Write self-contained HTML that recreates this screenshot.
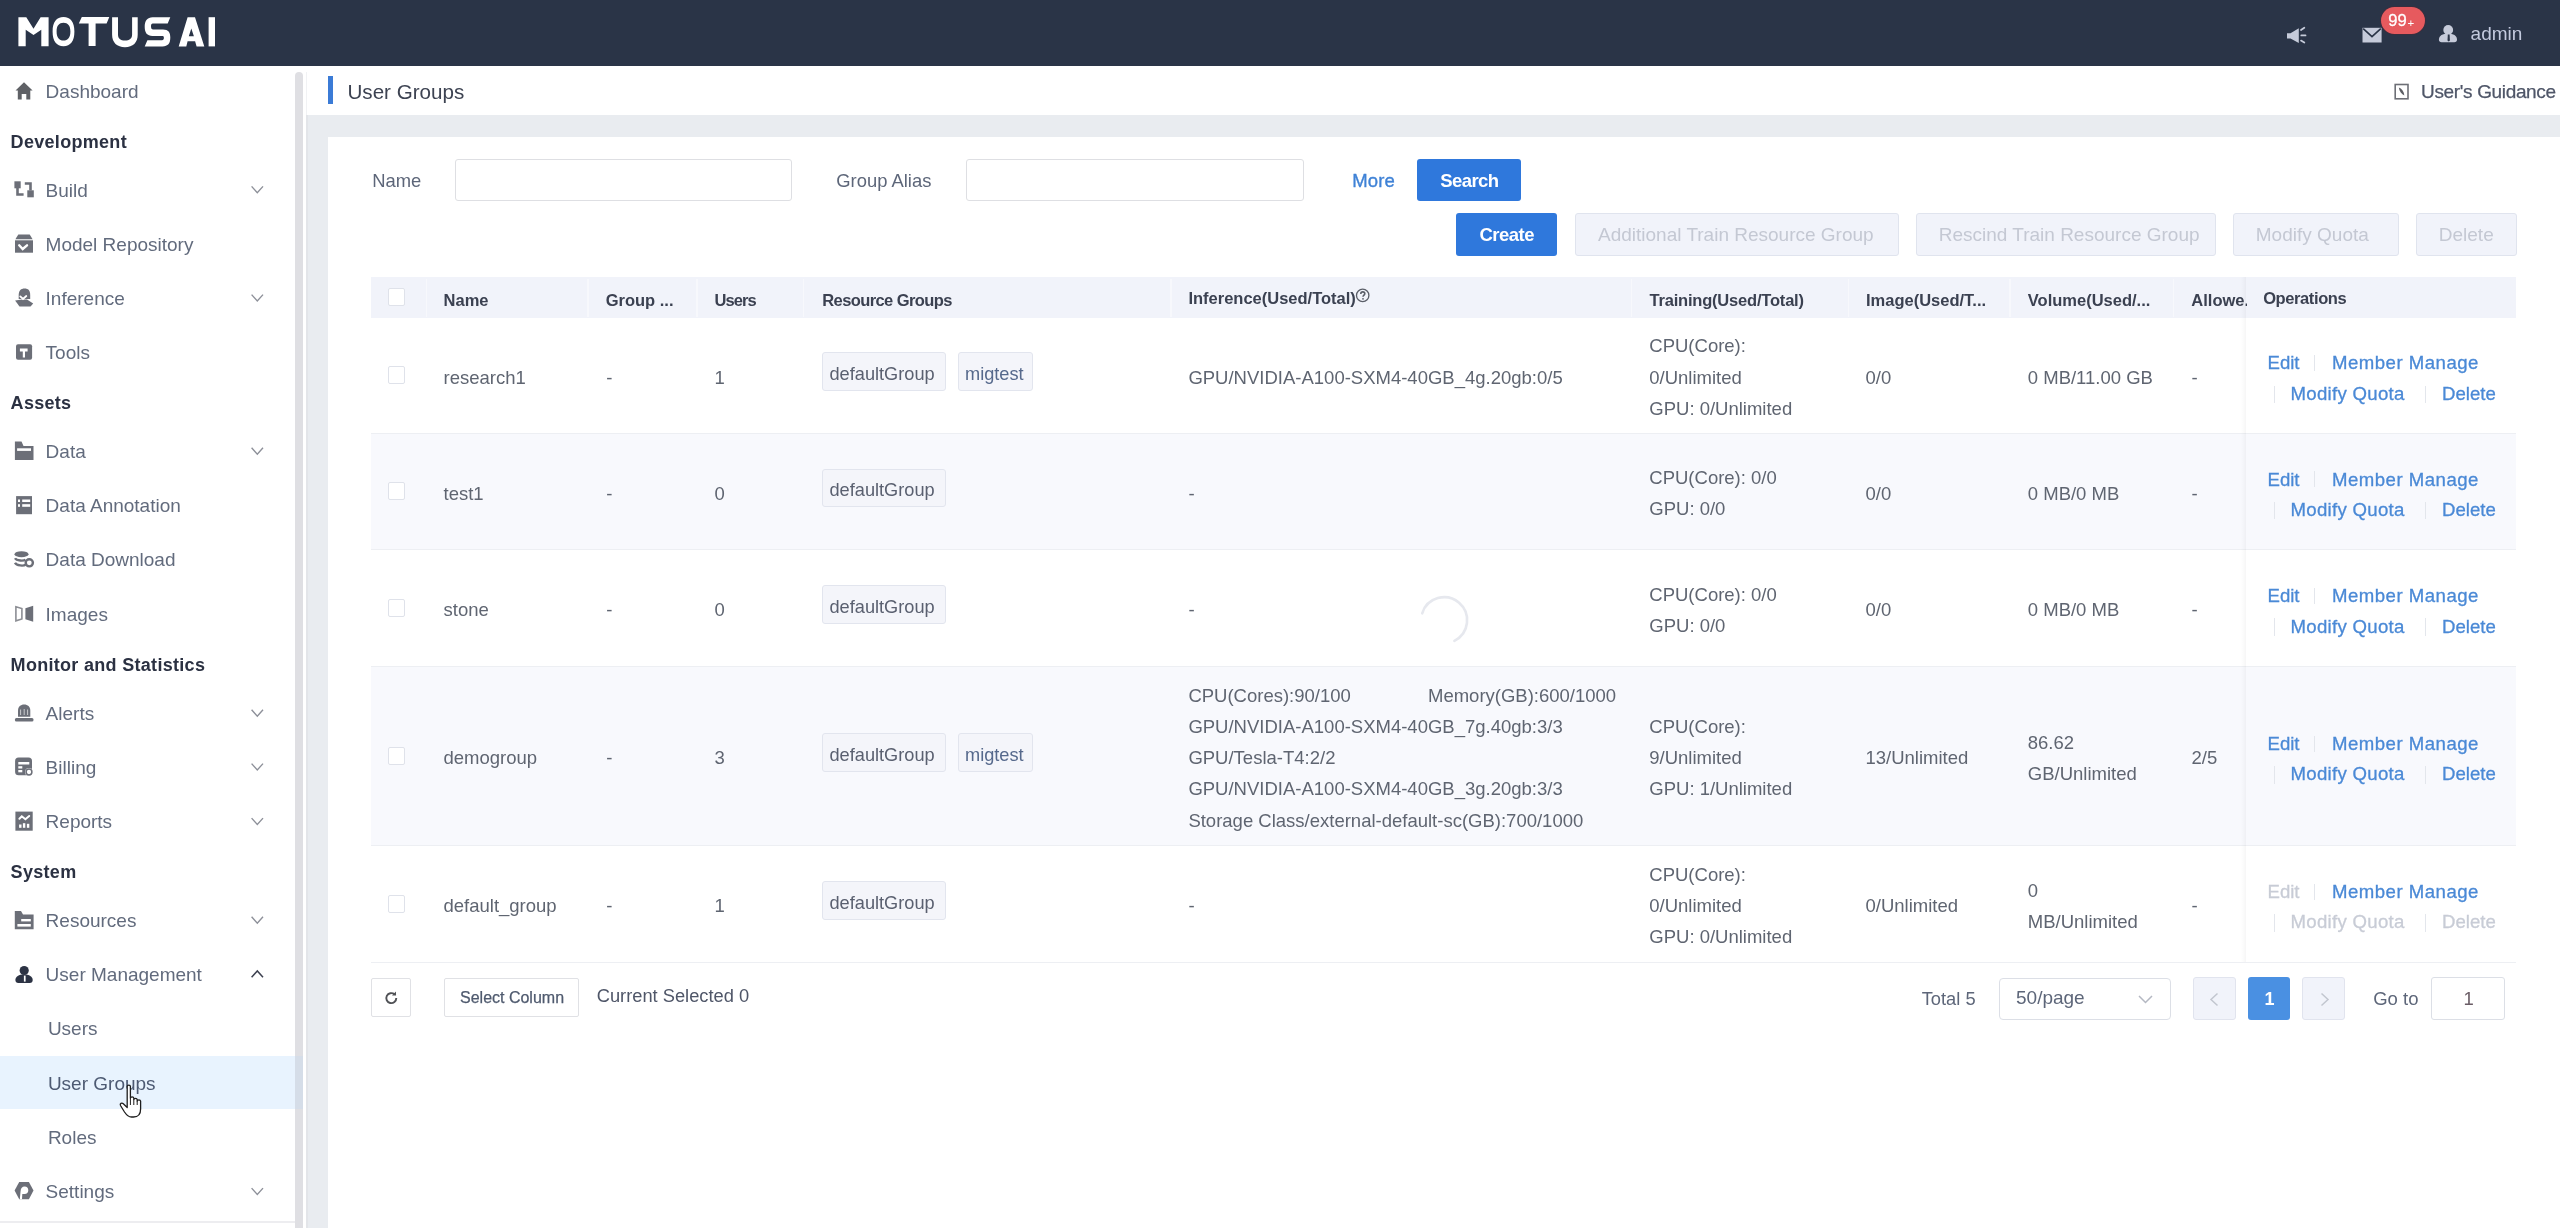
<!DOCTYPE html>
<html><head><meta charset="utf-8"><title>User Groups</title>
<style>
html,body{margin:0;padding:0;width:2560px;height:1228px;overflow:hidden;background:#fff}
body{position:relative;font-family:"Liberation Sans", sans-serif}
.t{position:absolute;white-space:nowrap;font-family:"Liberation Sans", sans-serif}
.r{position:absolute}
</style></head><body>
<div id="wrap" style="position:absolute;left:0;top:0;width:2560px;height:1228px;filter:blur(0.6px)">
<div class="r" style="left:0.0px;top:0.0px;width:2560.0px;height:1228.0px;background:#ffffff"></div>
<div class="r" style="left:0.0px;top:0.0px;width:2560.0px;height:66.0px;background:#2a3447"></div>
<svg class="r" style="left:0px;top:0px;" width="230" height="66" viewBox="0 0 230 66"><path fill="#fff" d="M18.4 46.3 L18.4 17.2 L26.3 17.2 L33.5 28.7 L40.6 17.2 L48.6 17.2 L48.6 46.3 L41.3 46.3 L41.3 29.8 L33.5 35.1 L25.7 29.8 L25.7 46.3 Z"/><path fill="#fff" fill-rule="evenodd" d="M63.5 17.1 C70.5 17.1 74.4 22 74.4 31.5 C74.4 41.2 70.5 46.2 63.5 46.2 C56.5 46.2 52.6 41.2 52.6 31.5 C52.6 22 56.5 17.1 63.5 17.1 Z M63.5 22.8 C59.2 22.8 56.6 25.6 56.6 31.5 C56.6 37.6 59.2 40.6 63.5 40.6 C67.8 40.6 70.4 37.6 70.4 31.5 C70.4 25.6 67.8 22.8 63.5 22.8 Z"/><path fill="#fff" d="M81.8 17.1 L109.3 17.1 L106.6 23.4 L95.6 23.4 L95.6 46 L88.6 46 L88.6 23.4 L78.8 23.4 Z"/><path fill="#fff" d="M112.1 17.2 L118.0 17.2 L118.0 34.5 C118.0 38.6 120.6 40.6 125.0 40.6 C129.4 40.6 132.1 38.6 132.1 34.5 L132.1 17.2 L137.7 17.2 L137.7 34.8 C137.7 42.6 133.0 47.2 125.0 47.2 C117.0 47.2 112.1 42.6 112.1 34.8 Z"/><path fill="#fff" d="M170.3 17.2 L167.7 23.6 L152.8 23.6 C151.5 23.6 151.0 24.4 151.0 26.3 C151.0 28.3 151.6 29.6 153.2 29.6 L163.0 29.6 C168.4 29.6 170.3 32.3 170.3 37.6 C170.3 43.6 168.0 46.4 162.5 46.4 L144.7 46.4 L147.4 40.2 L162.0 40.2 C163.4 40.2 163.9 39.3 163.9 37.7 C163.9 36.3 163.3 35.9 162.0 35.9 L152.4 35.9 C147.2 35.9 144.7 33.0 144.7 26.8 C144.7 20.6 147.4 17.2 152.6 17.2 Z"/><path fill="#fff" fill-rule="evenodd" d="M178.7 46.4 L187.6 17.2 L195.0 17.2 L204.3 46.4 L196.6 46.4 L195.1 41.2 L187.6 41.2 L186.3 46.4 Z M191.3 28.6 L188.8 36.2 L193.9 36.2 Z"/><path fill="#fff" d="M208.6 17.2 L215 17.2 L215 46.4 L208.6 46.4 Z"/></svg>
<svg class="r" style="left:0px;top:0px;pointer-events:none" width="2560" height="66" viewBox="0 0 2560 66"><path fill="#c6cbda" d="M2287 33.2 L2290.5 33.2 L2298.8 28.2 L2298.8 43 L2290.5 38.5 L2287 38.5 Z"/><path stroke="#c6cbda" stroke-width="1.8" stroke-linecap="round" fill="none" d="M2301 30 L2304.3 27.8 M2301.3 35.4 L2305.5 35.4 M2301 40.6 L2304.3 42.6"/></svg>
<svg class="r" style="left:0px;top:0px;" width="2560" height="66" viewBox="0 0 2560 66"><path fill="#c6cbda" d="M2362.5 27.8 L2381.6 27.8 L2381.6 42.5 L2362.5 42.5 Z"/><path stroke="#2a3447" stroke-width="1.6" fill="none" d="M2363.2 28.6 L2372 36.6 L2380.8 28.6"/></svg>
<div class="r" style="left:2380.6px;top:6.9px;width:44.4px;height:26.9px;background:#e65a5e;border-radius:14px;box-shadow:0 0 0 1px #3a2e3e"></div>
<div class="t" style="left:2388.2px;top:11.2px;font-size:16.6px;line-height:20px;color:#ffffff;-webkit-text-stroke:0.3px #fff">99</div>
<div class="t" style="left:2407.6px;top:12.6px;font-size:11.5px;line-height:20px;color:#ffffff;">+</div>
<svg class="r" style="left:0px;top:0px;" width="2560" height="66" viewBox="0 0 2560 66"><circle cx="2448.2" cy="29.9" r="4.9" fill="#c6cbda"/><path fill="#c6cbda" d="M2438.9 39.8 C2438.9 35.6 2442.6 33.5 2448 33.5 C2453.4 33.5 2457 35.6 2457 39.8 C2457 41.4 2456 42.3 2454.3 42.3 L2441.6 42.3 C2439.9 42.3 2438.9 41.4 2438.9 39.8 Z"/><path fill="#2a3447" d="M2447.8 34.6 L2449.6 34.6 L2449.9 40.4 L2448.7 41.4 L2447.5 40.4 Z"/></svg>
<div class="t" style="left:2470.6px;top:22.0px;font-size:19px;line-height:24px;color:#c3cade;">admin</div>
<div class="r" style="left:295.0px;top:72.0px;width:8.0px;height:1156.0px;background:#dfdfe3;border-radius:4px 4px 0 0"></div>
<div class="r" style="left:0.0px;top:1221.0px;width:295.0px;height:1.5px;background:#ededf0"></div>
<div class="r" style="left:0.0px;top:1055.7px;width:295.0px;height:53.7px;background:#e8f3fe"></div>
<div class="r" style="left:295.0px;top:1055.7px;width:8.0px;height:53.7px;background:#d5dde8"></div>
<div class="t" style="left:45.6px;top:77.0px;font-size:19px;line-height:30px;color:#626b7d;">Dashboard</div>
<div class="t" style="left:10.6px;top:127.0px;font-size:18px;line-height:30px;font-weight:bold;color:#2b3142;letter-spacing:0.3px">Development</div>
<div class="t" style="left:45.6px;top:175.5px;font-size:19px;line-height:30px;color:#626b7d;">Build</div>
<div class="t" style="left:45.6px;top:230.1px;font-size:19px;line-height:30px;color:#626b7d;">Model Repository</div>
<div class="t" style="left:45.6px;top:283.7px;font-size:19px;line-height:30px;color:#626b7d;">Inference</div>
<div class="t" style="left:45.6px;top:338.0px;font-size:19px;line-height:30px;color:#626b7d;">Tools</div>
<div class="t" style="left:10.6px;top:388.0px;font-size:18px;line-height:30px;font-weight:bold;color:#2b3142;letter-spacing:0.3px">Assets</div>
<div class="t" style="left:45.6px;top:436.8px;font-size:19px;line-height:30px;color:#626b7d;">Data</div>
<div class="t" style="left:45.6px;top:491.1px;font-size:19px;line-height:30px;color:#626b7d;">Data Annotation</div>
<div class="t" style="left:45.6px;top:545.3px;font-size:19px;line-height:30px;color:#626b7d;">Data Download</div>
<div class="t" style="left:45.6px;top:599.6px;font-size:19px;line-height:30px;color:#626b7d;">Images</div>
<div class="t" style="left:10.6px;top:649.9px;font-size:18px;line-height:30px;font-weight:bold;color:#2b3142;letter-spacing:0.3px">Monitor and Statistics</div>
<div class="t" style="left:45.6px;top:698.8px;font-size:19px;line-height:30px;color:#626b7d;">Alerts</div>
<div class="t" style="left:45.6px;top:752.7px;font-size:19px;line-height:30px;color:#626b7d;">Billing</div>
<div class="t" style="left:45.6px;top:807.2px;font-size:19px;line-height:30px;color:#626b7d;">Reports</div>
<div class="t" style="left:10.6px;top:857.0px;font-size:18px;line-height:30px;font-weight:bold;color:#2b3142;letter-spacing:0.3px">System</div>
<div class="t" style="left:45.6px;top:905.8px;font-size:19px;line-height:30px;color:#626b7d;">Resources</div>
<div class="t" style="left:45.6px;top:960.0px;font-size:19px;line-height:30px;color:#626b7d;">User Management</div>
<div class="t" style="left:47.9px;top:1014.2px;font-size:19px;line-height:30px;color:#626b7d;">Users</div>
<div class="t" style="left:47.9px;top:1068.8px;font-size:19px;line-height:30px;color:#4d5a73;">User Groups</div>
<div class="t" style="left:47.9px;top:1122.8px;font-size:19px;line-height:30px;color:#626b7d;">Roles</div>
<div class="t" style="left:45.6px;top:1177.2px;font-size:19px;line-height:30px;color:#626b7d;">Settings</div>
<svg class="r" style="left:0px;top:0px;" width="300" height="1228" viewBox="0 0 300 1228"><path fill="#5f6166" d="M24 82.3 L32.6 90.6 L30.3 90.6 L30.3 99.4 L26.3 99.4 L26.3 94 L21.7 94 L21.7 99.4 L17.8 99.4 L17.8 90.6 L15.5 90.6 Z"/><rect x="14.4" y="181.3" width="6.3" height="7" fill="#6c6f78"/><rect x="27.3" y="190.3" width="6.5" height="7" fill="#6c6f78"/><path stroke="#6c6f78" stroke-width="2.6" fill="none" d="M17.5 188 L17.5 194.5 L23.6 194.5 M24.8 183.5 L30.5 183.5 L30.5 190.5"/><path fill="#6c6f78" d="M18.3 234.5 L29.7 234.5 L32.6 239.2 L15.4 239.2 Z"/><rect x="15" y="240.3" width="18" height="12.4" fill="#6c6f78"/><path stroke="#fff" stroke-width="2.4" stroke-linecap="round" fill="none" d="M19.2 245.3 L22.7 249 L27 245.3"/><path fill="#6c6f78" d="M18.7 295 C18.7 290.5 21 288.5 24.6 288.5 C28.2 288.5 30.2 290.5 30.2 295 L30.2 299 L18.7 299 Z"/><path fill="#6c6f78" d="M15.1 300.6 L22 299.5 L27 299.5 L33.2 303.5 L30.5 306.4 L19.5 306.4 Z"/><path stroke="#fff" stroke-width="1.8" stroke-linecap="round" fill="none" d="M20.3 296.4 L23 299 L26.3 296"/><rect x="16" y="344.2" width="16.1" height="15.6" rx="2" fill="#6c6f78"/><path fill="#fff" d="M19.9 348.6 L27.6 348.6 L27.6 351.6 L25 351.6 L25 357.4 L22.8 357.4 L22.8 351.6 L19.9 351.6 Z"/><path fill="#6c6f78" d="M14.9 441.6 L21.5 441.6 L23.5 446 L33.5 446 L33.5 460 L14.9 460 Z"/><rect x="17.1" y="448.3" width="13.9" height="2.6" fill="#fff"/><rect x="16.1" y="496.1" width="15.9" height="18.1" fill="#6c6f78"/><rect x="18" y="499.5" width="2" height="2.5" fill="#fff"/><rect x="22.2" y="499.5" width="8" height="2.5" fill="#fff"/><rect x="18" y="504.2" width="2" height="2.6" fill="#fff"/><rect x="22.2" y="504.2" width="8" height="2.6" fill="#fff"/><ellipse cx="21.5" cy="554.2" rx="7" ry="3" fill="#6c6f78"/><path stroke="#6c6f78" stroke-width="2.3" fill="none" d="M15 558.3 C16.5 561 24 561 25.5 559.6 M15 562.8 C16.5 566 24 566 25.5 564.6"/><circle cx="29.3" cy="562.8" r="3.6" stroke="#6c6f78" stroke-width="2.4" fill="none"/><path stroke="#8c8e94" stroke-width="1.6" fill="none" d="M15.9 606.8 L21.9 608.6 L21.9 619 L15.9 620.8 Z"/><path fill="#6c6f78" d="M25.4 608.3 L33.2 605.8 L33.2 621.7 L25.4 619.2 Z"/><path fill="#6c6f78" d="M18 716.8 L18 710.5 C18 706.6 20.6 704.4 24.2 704.4 C27.7 704.4 30.3 706.6 30.3 710.5 L30.3 716.8 Z"/><rect x="14.9" y="718" width="18.6" height="3.5" rx="1.5" fill="#6c6f78"/><path stroke="#c9cacd" stroke-width="1" fill="none" d="M20.6 709.5 L20.6 715 M24.2 709 L24.2 715 M27.6 709.5 L27.6 715"/><rect x="15.1" y="757.6" width="16.9" height="17.6" rx="3.5" fill="#6c6f78"/><rect x="18.3" y="762" width="11" height="2.5" fill="#fff"/><rect x="18.3" y="766.2" width="4" height="2.3" fill="#fff"/><rect x="18.3" y="770" width="4" height="2.3" fill="#fff"/><circle cx="29" cy="772" r="3.9" fill="#fff"/><circle cx="29" cy="772" r="2.9" fill="none" stroke="#6c6f78" stroke-width="1.5"/><rect x="15.4" y="811.6" width="17.3" height="19.1" fill="#6c6f78"/><path stroke="#fff" stroke-width="2" stroke-linecap="round" fill="none" d="M19.4 818.8 L21.8 816.3 L25.4 819.2 L29.2 816"/><rect x="19.1" y="824.5" width="2.4" height="3.3" fill="#fff"/><rect x="22.9" y="823.2" width="2.4" height="4.6" fill="#fff"/><rect x="26.9" y="823.8" width="2.4" height="4" fill="#fff"/><path fill="#6c6f78" d="M14.8 910.9 L21 910.9 L23 914.6 L33.6 914.6 L33.6 929.2 L14.8 929.2 Z"/><rect x="21.2" y="919" width="9.6" height="2.4" fill="#fff"/><rect x="17.4" y="924" width="13.4" height="2.6" fill="#fff"/><circle cx="24.2" cy="970.5" r="4.6" fill="#2c3344"/><path fill="#2c3344" d="M15.4 980 C15.4 976.3 18.8 974.4 24 974.4 C29.3 974.4 32.7 976.3 32.7 980 C32.7 982 31.6 983 29.8 983 L18.3 983 C16.5 983 15.4 982 15.4 980 Z"/><rect x="23.9" y="975.6" width="1.7" height="6" fill="#fff"/><path fill="#6c6f78" d="M19.2 1181.9 L28.9 1181.9 L33.5 1190.5 L28.9 1199.2 L19.2 1199.2 L14.6 1190.5 Z"/><path fill="#fff" d="M19.8 1199.2 L20.6 1191 C20.8 1188 22.2 1186.4 24.6 1186.4 C27 1186.4 28.3 1188 28.3 1190.3 C28.3 1192.6 27 1194 24.6 1194 L22.3 1194 L22 1199.2 Z"/><path stroke="#8d9099" stroke-width="1.4" fill="none" d="M251.6 186.4 L257.3 192.8 L263 186.4"/><path stroke="#8d9099" stroke-width="1.4" fill="none" d="M251.6 294.6 L257.3 301.0 L263 294.6"/><path stroke="#8d9099" stroke-width="1.4" fill="none" d="M251.6 447.7 L257.3 454.1 L263 447.7"/><path stroke="#8d9099" stroke-width="1.4" fill="none" d="M251.6 709.7 L257.3 716.1 L263 709.7"/><path stroke="#8d9099" stroke-width="1.4" fill="none" d="M251.6 763.6 L257.3 770.0 L263 763.6"/><path stroke="#8d9099" stroke-width="1.4" fill="none" d="M251.6 818.1 L257.3 824.5 L263 818.1"/><path stroke="#8d9099" stroke-width="1.4" fill="none" d="M251.6 916.7 L257.3 923.1 L263 916.7"/><path stroke="#3d4150" stroke-width="1.5" fill="none" d="M251.6 977.3 L257.3 970.9 L263 977.3"/><path stroke="#8d9099" stroke-width="1.4" fill="none" d="M251.6 1188.1 L257.3 1194.5 L263 1188.1"/></svg>
<div class="r" style="left:303.0px;top:66.0px;width:2257.0px;height:49.0px;background:#ffffff"></div>
<div class="r" style="left:306.0px;top:72.0px;width:1.0px;height:43.0px;background:#f1f2f4"></div>
<div class="r" style="left:306.0px;top:115.0px;width:2254.0px;height:1113.0px;background:#e9ecf0"></div>
<div class="r" style="left:306.0px;top:115.0px;width:2.0px;height:1113.0px;background:#e3e5e9"></div>
<div class="r" style="left:328.0px;top:137.0px;width:2232.0px;height:1091.0px;background:#ffffff"></div>
<div class="r" style="left:327.6px;top:75.8px;width:5.4px;height:28.5px;background:#3b7bd6"></div>
<div class="t" style="left:347.5px;top:76.7px;font-size:20.6px;line-height:30px;color:#3d4352;">User Groups</div>
<svg class="r" style="left:0px;top:0px;" width="2560" height="115" viewBox="0 0 2560 115"><rect x="2395.2" y="84.5" width="12.8" height="14.3" fill="none" stroke="#6d6f76" stroke-width="1.6"/><path fill="#5c5e64" d="M2398.8 87.6 C2401.5 88.6 2404 91.5 2404.4 95.6 C2401.7 94.4 2399.3 91.6 2398.8 87.6 Z"/></svg>
<div class="t" style="left:2421.1px;top:77.0px;font-size:19px;line-height:30px;color:#4f5668;-webkit-text-stroke:0.25px #4f5668;letter-spacing:-0.35px">User's Guidance</div>
<div class="t" style="left:372.2px;top:165.6px;font-size:18.4px;line-height:30px;color:#5d6679;">Name</div>
<div class="r" style="left:454.8px;top:159.1px;width:336.8px;height:42.0px;border:1px solid #dedfe3;border-radius:3px;box-sizing:border-box;background:#fff"></div>
<div class="t" style="left:836.3px;top:166.4px;font-size:18.4px;line-height:30px;color:#5d6679;">Group Alias</div>
<div class="r" style="left:966.2px;top:159.1px;width:337.5px;height:41.8px;border:1px solid #dedfe3;border-radius:3px;box-sizing:border-box;background:#fff"></div>
<div class="t" style="left:1352.3px;top:166.4px;font-size:18.5px;line-height:30px;color:#3f82d6;-webkit-text-stroke:0.35px #3f82d6;letter-spacing:0.1px">More</div>
<div class="r" style="left:1417.0px;top:158.6px;width:103.8px;height:42.7px;background:#2f78dc;border-radius:3px"></div>
<div class="t" style="left:1440.2px;top:165.6px;font-size:18.5px;line-height:30px;font-weight:bold;color:#ffffff;letter-spacing:-0.55px">Search</div>
<div class="r" style="left:1456.4px;top:213.1px;width:101.1px;height:42.7px;background:#2f78dc;border-radius:3px"></div>
<div class="t" style="left:1479.4px;top:220.0px;font-size:18.5px;line-height:30px;font-weight:bold;color:#ffffff;letter-spacing:-0.5px">Create</div>
<div class="r" style="left:1574.5px;top:213.3px;width:324.5px;height:42.4px;background:#f1f3fa;border:1px solid #e0e4ee;border-radius:3px;box-sizing:border-box"></div>
<div class="t" style="left:1598.0px;top:219.5px;font-size:19px;line-height:30px;color:#c4c8d3;">Additional Train Resource Group</div>
<div class="r" style="left:1915.5px;top:213.3px;width:300.3px;height:42.4px;background:#f1f3fa;border:1px solid #e0e4ee;border-radius:3px;box-sizing:border-box"></div>
<div class="t" style="left:1938.7px;top:219.5px;font-size:19px;line-height:30px;color:#c4c8d3;">Rescind Train Resource Group</div>
<div class="r" style="left:2232.6px;top:213.3px;width:166.2px;height:42.4px;background:#f1f3fa;border:1px solid #e0e4ee;border-radius:3px;box-sizing:border-box"></div>
<div class="t" style="left:2255.8px;top:219.5px;font-size:19px;line-height:30px;color:#c4c8d3;">Modify Quota</div>
<div class="r" style="left:2415.6px;top:213.3px;width:101.1px;height:42.4px;background:#f1f3fa;border:1px solid #e0e4ee;border-radius:3px;box-sizing:border-box"></div>
<div class="t" style="left:2438.8px;top:219.5px;font-size:19px;line-height:30px;color:#c4c8d3;">Delete</div>
<div class="r" style="left:370.7px;top:277.4px;width:2145.8px;height:40.6px;background:#f1f3fa"></div>
<div class="r" style="left:425.9px;top:279.0px;width:1.5px;height:38.0px;background:#f7f8fc"></div>
<div class="r" style="left:587.0px;top:279.0px;width:1.5px;height:38.0px;background:#f7f8fc"></div>
<div class="r" style="left:696.4px;top:279.0px;width:1.5px;height:38.0px;background:#f7f8fc"></div>
<div class="r" style="left:802.8px;top:279.0px;width:1.5px;height:38.0px;background:#f7f8fc"></div>
<div class="r" style="left:1170.1px;top:279.0px;width:1.5px;height:38.0px;background:#f7f8fc"></div>
<div class="r" style="left:1630.5px;top:279.0px;width:1.5px;height:38.0px;background:#f7f8fc"></div>
<div class="r" style="left:1847.7px;top:279.0px;width:1.5px;height:38.0px;background:#f7f8fc"></div>
<div class="r" style="left:2009.4px;top:279.0px;width:1.5px;height:38.0px;background:#f7f8fc"></div>
<div class="r" style="left:2172.9px;top:279.0px;width:1.5px;height:38.0px;background:#f7f8fc"></div>
<div class="r" style="left:370.7px;top:318.0px;width:2145.8px;height:115.5px;background:#ffffff"></div>
<div class="r" style="left:370.7px;top:432.5px;width:2145.8px;height:1.5px;background:#edeff3"></div>
<div class="r" style="left:370.7px;top:433.5px;width:2145.8px;height:116.8px;background:#f8f9fd"></div>
<div class="r" style="left:370.7px;top:549.3px;width:2145.8px;height:1.5px;background:#edeff3"></div>
<div class="r" style="left:370.7px;top:550.3px;width:2145.8px;height:116.2px;background:#ffffff"></div>
<div class="r" style="left:370.7px;top:665.5px;width:2145.8px;height:1.5px;background:#edeff3"></div>
<div class="r" style="left:370.7px;top:666.5px;width:2145.8px;height:179.5px;background:#f8f9fd"></div>
<div class="r" style="left:370.7px;top:845.0px;width:2145.8px;height:1.5px;background:#edeff3"></div>
<div class="r" style="left:370.7px;top:846.0px;width:2145.8px;height:116.5px;background:#ffffff"></div>
<div class="r" style="left:370.7px;top:961.5px;width:2145.8px;height:1.5px;background:#edeff3"></div>
<div class="r" style="left:2241.0px;top:277.4px;width:5.0px;height:685.1px;background:linear-gradient(to right, rgba(0,0,0,0), rgba(0,0,0,0.035))"></div>
<div class="r" style="left:387.6px;top:287.9px;width:17.8px;height:17.8px;background:#fff;border:1px solid #dfe2ea;border-radius:2px;box-sizing:border-box"></div>
<div class="t" style="left:443.6px;top:284.5px;font-size:16.5px;line-height:30px;font-weight:bold;color:#3b4151;">Name</div>
<div class="t" style="left:605.7px;top:284.5px;font-size:16.5px;line-height:30px;font-weight:bold;color:#3b4151;">Group ...</div>
<div class="t" style="left:714.5px;top:284.5px;font-size:16.5px;line-height:30px;font-weight:bold;color:#3b4151;letter-spacing:-0.9px">Users</div>
<div class="t" style="left:822.3px;top:284.5px;font-size:16.5px;line-height:30px;font-weight:bold;color:#3b4151;letter-spacing:-0.6px">Resource Groups</div>
<div class="t" style="left:1188.4px;top:282.9px;font-size:16.5px;line-height:30px;font-weight:bold;color:#3b4151;">Inference(Used/Total)</div>
<svg class="r" style="left:1355px;top:288px;" width="16" height="16" viewBox="0 0 16 16"><circle cx="7.7" cy="7.4" r="6.2" fill="none" stroke="#5a5e68" stroke-width="1.3"/><path d="M5.8 5.9 C5.8 4.5 6.7 3.9 7.8 3.9 C9 3.9 9.8 4.7 9.8 5.7 C9.8 7 8 7.2 8 8.8" fill="none" stroke="#5a5e68" stroke-width="1.6"/><circle cx="8" cy="10.8" r="0.9" fill="#5a5e68"/></svg>
<div class="t" style="left:1649.5px;top:284.5px;font-size:16.5px;line-height:30px;font-weight:bold;color:#3b4151;letter-spacing:-0.2px">Training(Used/Total)</div>
<div class="t" style="left:1866.0px;top:284.5px;font-size:16.5px;line-height:30px;font-weight:bold;color:#3b4151;">Image(Used/T...</div>
<div class="t" style="left:2027.8px;top:284.5px;font-size:16.5px;line-height:30px;font-weight:bold;color:#3b4151;">Volume(Used/...</div>
<div class="r" style="left:2191.3px;top:290px;width:56px;height:24px;overflow:hidden">
<div class="t" style="left:0.0px;top:-5.5px;font-size:16.5px;line-height:30px;font-weight:bold;color:#3b4151;">Allowe.</div>
</div>
<div class="t" style="left:2263.2px;top:282.9px;font-size:16.5px;line-height:30px;font-weight:bold;color:#3b4151;letter-spacing:-0.4px">Operations</div>
<div class="r" style="left:387.6px;top:366.2px;width:17.8px;height:17.8px;background:#fff;border:1px solid #dfe2ea;border-radius:2px;box-sizing:border-box"></div>
<div class="t" style="left:443.5px;top:362.6px;font-size:18.5px;line-height:30px;color:#5f6571;">research1</div>
<div class="t" style="left:606.2px;top:362.6px;font-size:18.5px;line-height:30px;color:#5f6571;">-</div>
<div class="t" style="left:714.6px;top:362.6px;font-size:18.5px;line-height:30px;color:#5f6571;">1</div>
<div class="r" style="left:822.3px;top:352.4px;width:123.7px;height:38.9px;background:#f4f5fa;border:1px solid #e2e5ee;border-radius:3px;box-sizing:border-box"></div>
<div class="t" style="left:829.5px;top:359.0px;font-size:18.2px;line-height:30px;color:#5a6070;">defaultGroup</div>
<div class="r" style="left:957.8px;top:352.4px;width:75.6px;height:38.9px;background:#f4f5fa;border:1px solid #e2e5ee;border-radius:3px;box-sizing:border-box"></div>
<div class="t" style="left:965.0px;top:359.0px;font-size:18.2px;line-height:30px;color:#56698c;">migtest</div>
<div class="t" style="left:1188.4px;top:362.6px;font-size:18.5px;line-height:30px;color:#5f6571;">GPU/NVIDIA-A100-SXM4-40GB_4g.20gb:0/5</div>
<div class="t" style="left:1649.3px;top:331.4px;font-size:18.5px;line-height:30px;color:#5f6571;">CPU(Core):</div>
<div class="t" style="left:1649.3px;top:362.6px;font-size:18.5px;line-height:30px;color:#5f6571;">0/Unlimited</div>
<div class="t" style="left:1649.3px;top:393.8px;font-size:18.5px;line-height:30px;color:#5f6571;">GPU: 0/Unlimited</div>
<div class="t" style="left:1865.5px;top:362.6px;font-size:18.5px;line-height:30px;color:#5f6571;">0/0</div>
<div class="t" style="left:2027.8px;top:362.6px;font-size:18.5px;line-height:30px;color:#5f6571;">0 MB/11.00 GB</div>
<div class="t" style="left:2191.5px;top:362.6px;font-size:18.5px;line-height:30px;color:#5f6571;">-</div>
<div class="t" style="left:2267.5px;top:348.3px;font-size:18.6px;line-height:30px;color:#4a89d6;-webkit-text-stroke:0.3px #4a89d6;">Edit</div>
<div class="r" style="left:2314.2px;top:354.9px;width:1.2px;height:16.4px;background:#e3e6ec"></div>
<div class="t" style="left:2331.9px;top:348.3px;font-size:18.6px;line-height:30px;color:#4a89d6;-webkit-text-stroke:0.3px #4a89d6;letter-spacing:0.5px">Member Manage</div>
<div class="r" style="left:2273.5px;top:385.6px;width:1.2px;height:17.8px;background:#e3e6ec"></div>
<div class="t" style="left:2290.5px;top:378.8px;font-size:18.6px;line-height:30px;color:#4a89d6;-webkit-text-stroke:0.3px #4a89d6;letter-spacing:0.3px">Modify Quota</div>
<div class="r" style="left:2425.1px;top:385.6px;width:1.2px;height:17.8px;background:#e3e6ec"></div>
<div class="t" style="left:2442.0px;top:378.8px;font-size:18.6px;line-height:30px;color:#4a89d6;-webkit-text-stroke:0.3px #4a89d6;">Delete</div>
<div class="r" style="left:387.6px;top:482.4px;width:17.8px;height:17.8px;background:#fff;border:1px solid #dfe2ea;border-radius:2px;box-sizing:border-box"></div>
<div class="t" style="left:443.5px;top:478.8px;font-size:18.5px;line-height:30px;color:#5f6571;">test1</div>
<div class="t" style="left:606.2px;top:478.8px;font-size:18.5px;line-height:30px;color:#5f6571;">-</div>
<div class="t" style="left:714.6px;top:478.8px;font-size:18.5px;line-height:30px;color:#5f6571;">0</div>
<div class="r" style="left:822.3px;top:468.5px;width:123.7px;height:38.9px;background:#f4f5fa;border:1px solid #e2e5ee;border-radius:3px;box-sizing:border-box"></div>
<div class="t" style="left:829.5px;top:475.2px;font-size:18.2px;line-height:30px;color:#5a6070;">defaultGroup</div>
<div class="t" style="left:1188.4px;top:478.8px;font-size:18.5px;line-height:30px;color:#5f6571;">-</div>
<div class="t" style="left:1649.3px;top:463.2px;font-size:18.5px;line-height:30px;color:#5f6571;">CPU(Core): 0/0</div>
<div class="t" style="left:1649.3px;top:494.4px;font-size:18.5px;line-height:30px;color:#5f6571;">GPU: 0/0</div>
<div class="t" style="left:1865.5px;top:478.8px;font-size:18.5px;line-height:30px;color:#5f6571;">0/0</div>
<div class="t" style="left:2027.8px;top:478.8px;font-size:18.5px;line-height:30px;color:#5f6571;">0 MB/0 MB</div>
<div class="t" style="left:2191.5px;top:478.8px;font-size:18.5px;line-height:30px;color:#5f6571;">-</div>
<div class="t" style="left:2267.5px;top:464.5px;font-size:18.6px;line-height:30px;color:#4a89d6;-webkit-text-stroke:0.3px #4a89d6;">Edit</div>
<div class="r" style="left:2314.2px;top:471.1px;width:1.2px;height:16.4px;background:#e3e6ec"></div>
<div class="t" style="left:2331.9px;top:464.5px;font-size:18.6px;line-height:30px;color:#4a89d6;-webkit-text-stroke:0.3px #4a89d6;letter-spacing:0.5px">Member Manage</div>
<div class="r" style="left:2273.5px;top:501.7px;width:1.2px;height:17.8px;background:#e3e6ec"></div>
<div class="t" style="left:2290.5px;top:495.0px;font-size:18.6px;line-height:30px;color:#4a89d6;-webkit-text-stroke:0.3px #4a89d6;letter-spacing:0.3px">Modify Quota</div>
<div class="r" style="left:2425.1px;top:501.7px;width:1.2px;height:17.8px;background:#e3e6ec"></div>
<div class="t" style="left:2442.0px;top:495.0px;font-size:18.6px;line-height:30px;color:#4a89d6;-webkit-text-stroke:0.3px #4a89d6;">Delete</div>
<div class="r" style="left:387.6px;top:598.9px;width:17.8px;height:17.8px;background:#fff;border:1px solid #dfe2ea;border-radius:2px;box-sizing:border-box"></div>
<div class="t" style="left:443.5px;top:595.3px;font-size:18.5px;line-height:30px;color:#5f6571;">stone</div>
<div class="t" style="left:606.2px;top:595.3px;font-size:18.5px;line-height:30px;color:#5f6571;">-</div>
<div class="t" style="left:714.6px;top:595.3px;font-size:18.5px;line-height:30px;color:#5f6571;">0</div>
<div class="r" style="left:822.3px;top:585.0px;width:123.7px;height:38.9px;background:#f4f5fa;border:1px solid #e2e5ee;border-radius:3px;box-sizing:border-box"></div>
<div class="t" style="left:829.5px;top:591.7px;font-size:18.2px;line-height:30px;color:#5a6070;">defaultGroup</div>
<div class="t" style="left:1188.4px;top:595.3px;font-size:18.5px;line-height:30px;color:#5f6571;">-</div>
<div class="t" style="left:1649.3px;top:579.7px;font-size:18.5px;line-height:30px;color:#5f6571;">CPU(Core): 0/0</div>
<div class="t" style="left:1649.3px;top:610.9px;font-size:18.5px;line-height:30px;color:#5f6571;">GPU: 0/0</div>
<div class="t" style="left:1865.5px;top:595.3px;font-size:18.5px;line-height:30px;color:#5f6571;">0/0</div>
<div class="t" style="left:2027.8px;top:595.3px;font-size:18.5px;line-height:30px;color:#5f6571;">0 MB/0 MB</div>
<div class="t" style="left:2191.5px;top:595.3px;font-size:18.5px;line-height:30px;color:#5f6571;">-</div>
<div class="t" style="left:2267.5px;top:581.0px;font-size:18.6px;line-height:30px;color:#4a89d6;-webkit-text-stroke:0.3px #4a89d6;">Edit</div>
<div class="r" style="left:2314.2px;top:587.6px;width:1.2px;height:16.4px;background:#e3e6ec"></div>
<div class="t" style="left:2331.9px;top:581.0px;font-size:18.6px;line-height:30px;color:#4a89d6;-webkit-text-stroke:0.3px #4a89d6;letter-spacing:0.5px">Member Manage</div>
<div class="r" style="left:2273.5px;top:618.2px;width:1.2px;height:17.8px;background:#e3e6ec"></div>
<div class="t" style="left:2290.5px;top:611.5px;font-size:18.6px;line-height:30px;color:#4a89d6;-webkit-text-stroke:0.3px #4a89d6;letter-spacing:0.3px">Modify Quota</div>
<div class="r" style="left:2425.1px;top:618.2px;width:1.2px;height:17.8px;background:#e3e6ec"></div>
<div class="t" style="left:2442.0px;top:611.5px;font-size:18.6px;line-height:30px;color:#4a89d6;-webkit-text-stroke:0.3px #4a89d6;">Delete</div>
<div class="r" style="left:387.6px;top:746.8px;width:17.8px;height:17.8px;background:#fff;border:1px solid #dfe2ea;border-radius:2px;box-sizing:border-box"></div>
<div class="t" style="left:443.5px;top:743.1px;font-size:18.5px;line-height:30px;color:#5f6571;">demogroup</div>
<div class="t" style="left:606.2px;top:743.1px;font-size:18.5px;line-height:30px;color:#5f6571;">-</div>
<div class="t" style="left:714.6px;top:743.1px;font-size:18.5px;line-height:30px;color:#5f6571;">3</div>
<div class="r" style="left:822.3px;top:732.9px;width:123.7px;height:38.9px;background:#f4f5fa;border:1px solid #e2e5ee;border-radius:3px;box-sizing:border-box"></div>
<div class="t" style="left:829.5px;top:739.5px;font-size:18.2px;line-height:30px;color:#5a6070;">defaultGroup</div>
<div class="r" style="left:957.8px;top:732.9px;width:75.6px;height:38.9px;background:#f4f5fa;border:1px solid #e2e5ee;border-radius:3px;box-sizing:border-box"></div>
<div class="t" style="left:965.0px;top:739.5px;font-size:18.2px;line-height:30px;color:#56698c;">migtest</div>
<div class="t" style="left:1188.4px;top:680.7px;font-size:18.5px;line-height:30px;color:#5f6571;">CPU(Cores):90/100</div>
<div class="t" style="left:1188.4px;top:711.9px;font-size:18.5px;line-height:30px;color:#5f6571;">GPU/NVIDIA-A100-SXM4-40GB_7g.40gb:3/3</div>
<div class="t" style="left:1188.4px;top:743.1px;font-size:18.5px;line-height:30px;color:#5f6571;">GPU/Tesla-T4:2/2</div>
<div class="t" style="left:1188.4px;top:774.3px;font-size:18.5px;line-height:30px;color:#5f6571;">GPU/NVIDIA-A100-SXM4-40GB_3g.20gb:3/3</div>
<div class="t" style="left:1188.4px;top:805.5px;font-size:18.5px;line-height:30px;color:#5f6571;">Storage Class/external-default-sc(GB):700/1000</div>
<div class="t" style="left:1428.0px;top:680.7px;font-size:18.5px;line-height:30px;color:#5f6571;">Memory(GB):600/1000</div>
<div class="t" style="left:1649.3px;top:711.9px;font-size:18.5px;line-height:30px;color:#5f6571;">CPU(Core):</div>
<div class="t" style="left:1649.3px;top:743.1px;font-size:18.5px;line-height:30px;color:#5f6571;">9/Unlimited</div>
<div class="t" style="left:1649.3px;top:774.3px;font-size:18.5px;line-height:30px;color:#5f6571;">GPU: 1/Unlimited</div>
<div class="t" style="left:1865.5px;top:743.1px;font-size:18.5px;line-height:30px;color:#5f6571;">13/Unlimited</div>
<div class="t" style="left:2027.8px;top:727.5px;font-size:18.5px;line-height:30px;color:#5f6571;">86.62</div>
<div class="t" style="left:2027.8px;top:758.7px;font-size:18.5px;line-height:30px;color:#5f6571;">GB/Unlimited</div>
<div class="t" style="left:2191.5px;top:743.1px;font-size:18.5px;line-height:30px;color:#5f6571;">2/5</div>
<div class="t" style="left:2267.5px;top:728.8px;font-size:18.6px;line-height:30px;color:#4a89d6;-webkit-text-stroke:0.3px #4a89d6;">Edit</div>
<div class="r" style="left:2314.2px;top:735.5px;width:1.2px;height:16.4px;background:#e3e6ec"></div>
<div class="t" style="left:2331.9px;top:728.8px;font-size:18.6px;line-height:30px;color:#4a89d6;-webkit-text-stroke:0.3px #4a89d6;letter-spacing:0.5px">Member Manage</div>
<div class="r" style="left:2273.5px;top:766.0px;width:1.2px;height:17.8px;background:#e3e6ec"></div>
<div class="t" style="left:2290.5px;top:759.3px;font-size:18.6px;line-height:30px;color:#4a89d6;-webkit-text-stroke:0.3px #4a89d6;letter-spacing:0.3px">Modify Quota</div>
<div class="r" style="left:2425.1px;top:766.0px;width:1.2px;height:17.8px;background:#e3e6ec"></div>
<div class="t" style="left:2442.0px;top:759.3px;font-size:18.6px;line-height:30px;color:#4a89d6;-webkit-text-stroke:0.3px #4a89d6;">Delete</div>
<div class="r" style="left:387.6px;top:894.8px;width:17.8px;height:17.8px;background:#fff;border:1px solid #dfe2ea;border-radius:2px;box-sizing:border-box"></div>
<div class="t" style="left:443.5px;top:891.1px;font-size:18.5px;line-height:30px;color:#5f6571;">default_group</div>
<div class="t" style="left:606.2px;top:891.1px;font-size:18.5px;line-height:30px;color:#5f6571;">-</div>
<div class="t" style="left:714.6px;top:891.1px;font-size:18.5px;line-height:30px;color:#5f6571;">1</div>
<div class="r" style="left:822.3px;top:880.9px;width:123.7px;height:38.9px;background:#f4f5fa;border:1px solid #e2e5ee;border-radius:3px;box-sizing:border-box"></div>
<div class="t" style="left:829.5px;top:887.5px;font-size:18.2px;line-height:30px;color:#5a6070;">defaultGroup</div>
<div class="t" style="left:1188.4px;top:891.1px;font-size:18.5px;line-height:30px;color:#5f6571;">-</div>
<div class="t" style="left:1649.3px;top:859.9px;font-size:18.5px;line-height:30px;color:#5f6571;">CPU(Core):</div>
<div class="t" style="left:1649.3px;top:891.1px;font-size:18.5px;line-height:30px;color:#5f6571;">0/Unlimited</div>
<div class="t" style="left:1649.3px;top:922.3px;font-size:18.5px;line-height:30px;color:#5f6571;">GPU: 0/Unlimited</div>
<div class="t" style="left:1865.5px;top:891.1px;font-size:18.5px;line-height:30px;color:#5f6571;">0/Unlimited</div>
<div class="t" style="left:2027.8px;top:875.5px;font-size:18.5px;line-height:30px;color:#5f6571;">0</div>
<div class="t" style="left:2027.8px;top:906.7px;font-size:18.5px;line-height:30px;color:#5f6571;">MB/Unlimited</div>
<div class="t" style="left:2191.5px;top:891.1px;font-size:18.5px;line-height:30px;color:#5f6571;">-</div>
<div class="t" style="left:2267.5px;top:876.8px;font-size:18.6px;line-height:30px;color:#c8ccd6;-webkit-text-stroke:0.3px #c8ccd6;">Edit</div>
<div class="r" style="left:2314.2px;top:883.5px;width:1.2px;height:16.4px;background:#e3e6ec"></div>
<div class="t" style="left:2331.9px;top:876.8px;font-size:18.6px;line-height:30px;color:#4a89d6;-webkit-text-stroke:0.3px #4a89d6;letter-spacing:0.5px">Member Manage</div>
<div class="r" style="left:2273.5px;top:914.0px;width:1.2px;height:17.8px;background:#e3e6ec"></div>
<div class="t" style="left:2290.5px;top:907.3px;font-size:18.6px;line-height:30px;color:#c8ccd6;-webkit-text-stroke:0.3px #c8ccd6;letter-spacing:0.3px">Modify Quota</div>
<div class="r" style="left:2425.1px;top:914.0px;width:1.2px;height:17.8px;background:#e3e6ec"></div>
<div class="t" style="left:2442.0px;top:907.3px;font-size:18.6px;line-height:30px;color:#c8ccd6;-webkit-text-stroke:0.3px #c8ccd6;">Delete</div>
<div class="r" style="left:371.2px;top:977.5px;width:40.0px;height:39.1px;border:1px solid #e0e1e5;border-radius:2px;box-sizing:border-box;background:#fff"></div>
<svg class="r" style="left:383px;top:991px;" width="16" height="16" viewBox="0 0 16 16"><path d="M13.3 7.1 A5 5 0 1 1 11.5 3.27" fill="none" stroke="#505256" stroke-width="1.9"/><path d="M9.0 4.5 L12.9 0.6 L13.1 4.5 Z" fill="#505256"/></svg>
<div class="r" style="left:444.4px;top:977.5px;width:134.4px;height:39.1px;border:1px solid #e0e1e5;border-radius:2px;box-sizing:border-box;background:#fff"></div>
<div class="t" style="left:460.0px;top:982.8px;font-size:16px;line-height:30px;color:#4f5a6e;-webkit-text-stroke:0.25px #4f5a6e">Select Column</div>
<div class="t" style="left:596.7px;top:981.2px;font-size:18.3px;line-height:30px;color:#4f5668;">Current Selected 0</div>
<div class="t" style="left:1921.7px;top:983.8px;font-size:18.3px;line-height:30px;color:#5d6679;">Total 5</div>
<div class="r" style="left:1999.0px;top:977.6px;width:171.7px;height:42.8px;border:1px solid #dcdfe6;border-radius:4px;box-sizing:border-box;background:#fff"></div>
<div class="t" style="left:2016.0px;top:983.4px;font-size:19px;line-height:30px;color:#5d6679;">50/page</div>
<svg class="r" style="left:2136px;top:990px;" width="20" height="20" viewBox="0 0 20 20"><path d="M3 6 L9.5 12.5 L16 6" fill="none" stroke="#b4b8c2" stroke-width="1.5"/></svg>
<div class="r" style="left:2193.3px;top:977.4px;width:42.7px;height:42.5px;background:#f1f3fa;border:1px solid #e1e4ee;border-radius:3px;box-sizing:border-box"></div>
<svg class="r" style="left:2193px;top:977px;" width="44" height="43" viewBox="0 0 44 43"><path d="M24.5 16.5 L18 22.5 L24.5 28.5" fill="none" stroke="#c2c6cf" stroke-width="1.5"/></svg>
<div class="r" style="left:2247.7px;top:977.4px;width:42.8px;height:42.5px;background:#4a90e2;border-radius:3px"></div>
<div class="t" style="left:2264.5px;top:983.9px;font-size:18px;line-height:30px;font-weight:bold;color:#ffffff;">1</div>
<div class="r" style="left:2302.0px;top:977.4px;width:42.8px;height:42.5px;background:#f1f3fa;border:1px solid #e1e4ee;border-radius:3px;box-sizing:border-box"></div>
<svg class="r" style="left:2302px;top:977px;" width="44" height="43" viewBox="0 0 44 43"><path d="M19.5 16.5 L26 22.5 L19.5 28.5" fill="none" stroke="#c2c6cf" stroke-width="1.5"/></svg>
<div class="t" style="left:2373.2px;top:983.6px;font-size:18.5px;line-height:30px;color:#5d6679;">Go to</div>
<div class="r" style="left:2430.9px;top:977.4px;width:74.5px;height:42.5px;border:1px solid #dcdfe6;border-radius:3px;box-sizing:border-box;background:#fff"></div>
<div class="t" style="left:2463.5px;top:983.6px;font-size:18.5px;line-height:30px;color:#6a5d66;">1</div>
<svg class="r" style="left:1410px;top:585px;" width="70" height="70" viewBox="0 0 70 70"><path d="M12.2 28.3 A23 23 0 1 1 44.4 55.8" fill="none" stroke="#e6e8ee" stroke-width="2.6" stroke-linecap="round"/></svg>
<svg class="r" style="left:115px;top:1080px;" width="40" height="42" viewBox="0 0 40 42"><path d="M12.2 6.5 C12.2 4.7 15.4 4.7 15.4 6.5 L15.4 18 C15.6 16.6 18.6 16.6 18.8 18 L18.8 19.5 C19 18.1 22 18.1 22.2 19.5 L22.2 21 C22.4 19.6 25.4 19.6 25.6 21 L25.6 29 C25.6 34 23 37 18.5 37 L16.5 37 C13 37 11.5 35 9.5 32 L5.5 25.5 C4.5 23.7 6.8 22.3 8.3 23.7 L12.2 27.5 Z" fill="#fff" stroke="#1d1d1d" stroke-width="1.3" stroke-linejoin="round"/><path d="M15.4 18 L15.4 25 M18.8 19.5 L18.8 25 M22.2 21 L22.2 25" stroke="#1d1d1d" stroke-width="1"/></svg>
</div>
</body></html>
